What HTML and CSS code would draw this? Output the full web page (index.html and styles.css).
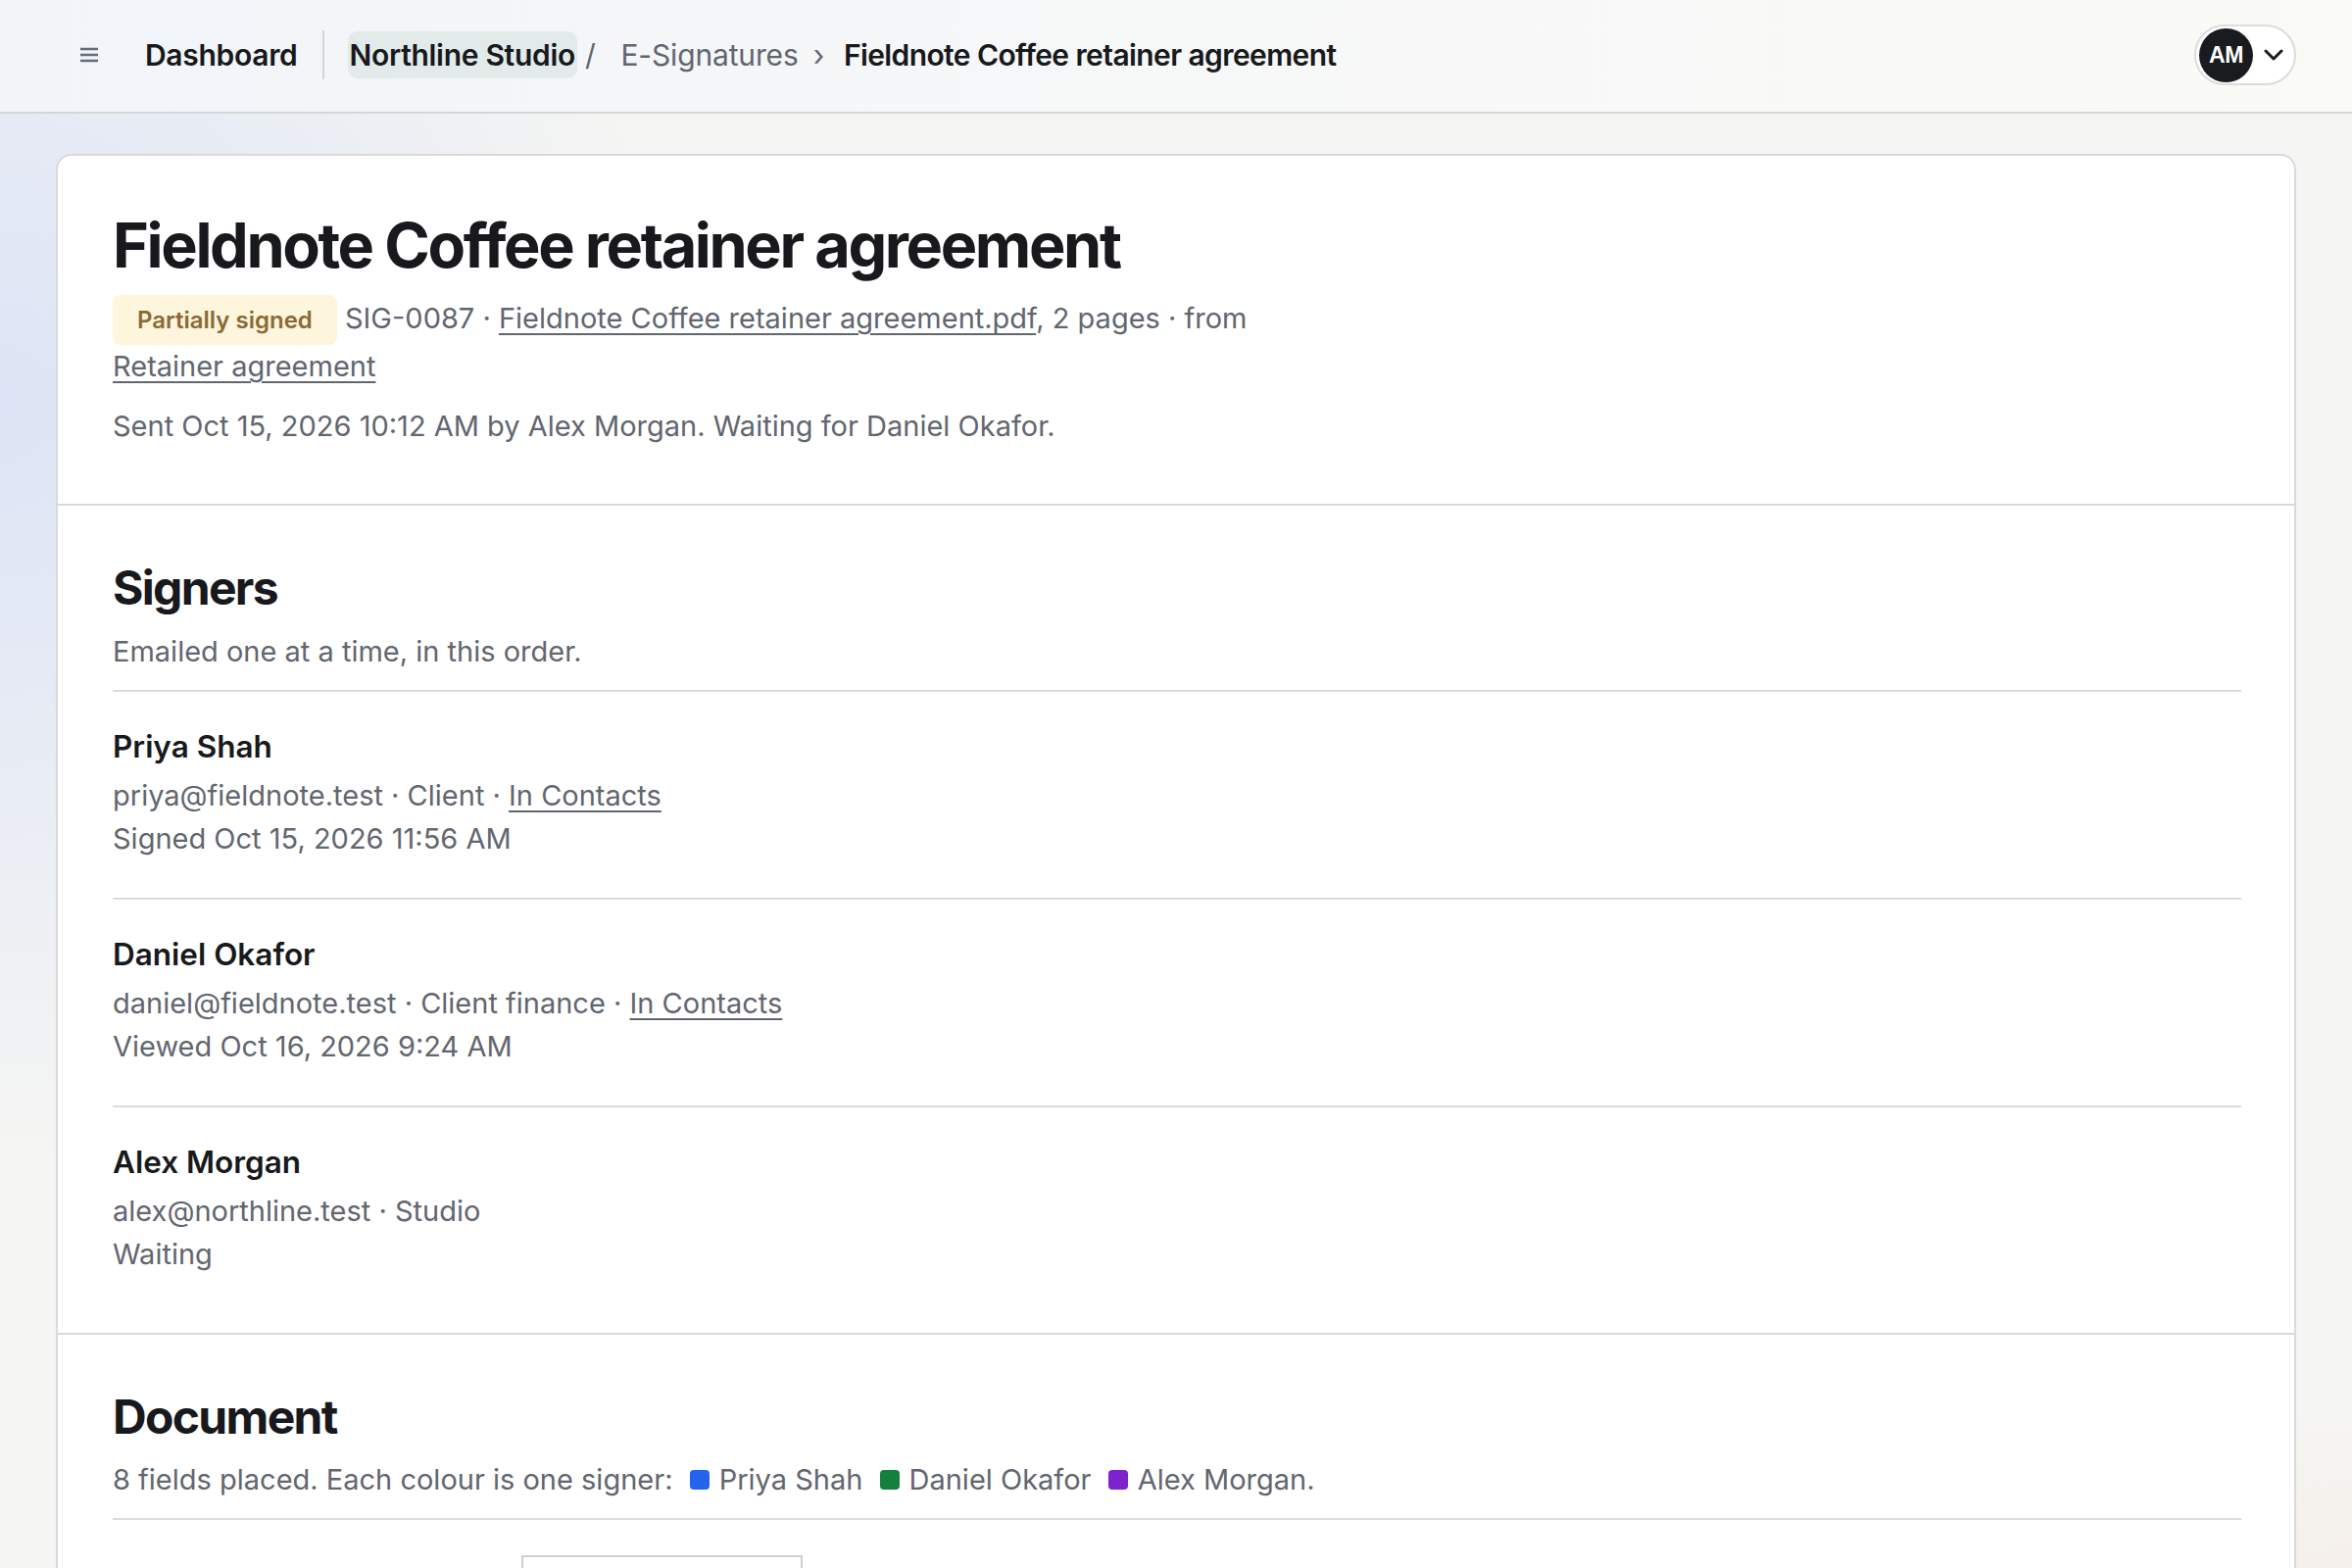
FILE: index.html
```html
<!DOCTYPE html>
<html lang="en">
<head>
<meta charset="utf-8">
<title>Fieldnote Coffee retainer agreement</title>
<link rel="stylesheet" href="styles.css">
</head>
<body>
<header class="topbar">
  <button class="menu-btn" aria-label="Menu">
    <svg width="20" height="16" viewBox="0 0 20 16"><path d="M1 2h18M1 8h18M1 14h18" stroke="#676b74" stroke-width="2.4" fill="none"/></svg>
  </button>
  <nav class="crumbs">
    <a class="crumb-home" href="#">Dashboard</a>
    <span class="crumb-divider"></span>
    <a class="crumb-org" href="#">Northline Studio</a>
    <span class="crumb-slash">/</span>
    <a class="crumb-muted" href="#">E-Signatures</a>
    <span class="crumb-chev">›</span>
    <span class="crumb-current">Fieldnote Coffee retainer agreement</span>
  </nav>
  <button class="account" aria-label="Account">
    <span class="avatar">AM</span>
    <svg width="20" height="12" viewBox="0 0 20 12"><path d="M2 2l8 8 8-8" stroke="#1a1b1f" stroke-width="3" fill="none" stroke-linecap="round" stroke-linejoin="round"/></svg>
  </button>
</header>
<main class="page">
  <article class="card">
    <section class="card-section summary">
      <h1 class="doc-title">Fieldnote Coffee retainer agreement</h1>
      <p class="meta"><span class="badge">Partially signed</span> SIG-0087 · <a href="#">Fieldnote Coffee retainer agreement.pdf</a>, 2 pages · from <a href="#">Retainer agreement</a></p>
      <p class="sent">Sent Oct 15, 2026 10:12 AM by Alex Morgan. Waiting for Daniel Okafor.</p>
    </section>
    <section class="card-section signers">
      <h2 class="section-title">Signers</h2>
      <p class="section-sub">Emailed one at a time, in this order.</p>
      <ol class="signer-list">
        <li class="signer">
          <div class="signer-name">Priya Shah</div>
          <div class="signer-line">priya@fieldnote.test · Client · <a href="#">In Contacts</a></div>
          <div class="signer-line">Signed Oct 15, 2026 11:56 AM</div>
        </li>
        <li class="signer">
          <div class="signer-name">Daniel Okafor</div>
          <div class="signer-line">daniel@fieldnote.test · Client finance · <a href="#">In Contacts</a></div>
          <div class="signer-line">Viewed Oct 16, 2026 9:24 AM</div>
        </li>
        <li class="signer">
          <div class="signer-name">Alex Morgan</div>
          <div class="signer-line">alex@northline.test · Studio</div>
          <div class="signer-line">Waiting</div>
        </li>
      </ol>
    </section>
    <section class="card-section document">
      <h2 class="section-title">Document</h2>
      <p class="section-sub">8 fields placed. Each colour is one signer: <span class="swatch swatch-blue"></span>Priya Shah <span class="swatch swatch-green"></span>Daniel Okafor <span class="swatch swatch-purple"></span>Alex Morgan.</p>
      <div class="doc-viewer">
        <div class="doc-page"></div>
      </div>
    </section>
  </article>
</main>
</body>
</html>
```
FILE: styles.css
```css
* { box-sizing: border-box; }
html, body { margin: 0; padding: 0; }
body {
  font-family: Inter, "Noto Sans", sans-serif;
  color: #18191c;
  min-height: 1600px;
  background:
    radial-gradient(ellipse 1000px 1100px at 0% 20%, rgba(214, 224, 246, 0.8), rgba(214, 224, 246, 0) 70%),
    radial-gradient(ellipse 900px 900px at 100% 100%, rgba(245, 222, 204, 0.85), rgba(245, 222, 204, 0) 70%),
    #f5f5f3;
}
a { color: inherit; }

.topbar {
  display: flex;
  align-items: center;
  height: 116px;
  padding: 0 57px 2px 72px;
  border-bottom: 2px solid #d6d6d6;
  background: linear-gradient(90deg, #f1f4f9 0%, #f6f7f8 40%, #fafaf7 100%);
}
.menu-btn {
  display: flex;
  align-items: center;
  justify-content: center;
  width: 38px;
  height: 38px;
  padding: 0;
  border: 0;
  background: none;
}
.crumbs {
  display: flex;
  align-items: center;
  margin-left: 38px;
  font-size: 30px;
  font-weight: 600;
  letter-spacing: -0.01em;
}
.crumbs a { text-decoration: none; }
.crumb-home { color: #18191c; }
.crumb-divider {
  width: 2px;
  height: 50px;
  margin: 0 24px 0 25px;
  background: #d3d4d6;
}
.crumb-org {
  color: #18191c;
  background: #e2ebea;
  border-radius: 10px;
  padding: 6px 2px;
}
.crumb-slash {
  margin: 0 26px 0 8px;
  font-weight: 400;
  color: #62666f;
}
.crumb-muted { color: #62666f; font-weight: 400; letter-spacing: -0.005em; }
.crumb-chev {
  margin: 0 20px 0 15px;
  font-weight: 400;
  color: #62666f;
}
.crumb-current { color: #18191c; letter-spacing: -0.02em; }

.account {
  margin-left: auto;
  display: flex;
  align-items: center;
  gap: 11px;
  height: 62px;
  padding: 0 11px 0 3px;
  border: 2px solid #dcdcdc;
  border-radius: 31px;
  background: #fff;
}
.avatar {
  display: flex;
  align-items: center;
  justify-content: center;
  width: 55px;
  height: 55px;
  border-radius: 50%;
  background: #1a1b1f;
  color: #fff;
  font-size: 23px;
  font-weight: 700;
  letter-spacing: -0.02em;
}

.page { padding: 41px 57px 0; }
.card {
  background: #fff;
  border: 2px solid #d9d9d9;
  border-radius: 16px;
  overflow: hidden;
}
.card-section {
  padding: 55px 54px 57px 56px;
  border-bottom: 2px solid #d9d9d9;
}
.card-section:last-child { border-bottom: 0; }

.doc-title {
  margin: 0 0 15px;
  font-size: 63px;
  line-height: 1.15;
  font-weight: 700;
  letter-spacing: -0.038em;
}
.meta, .sent, .section-sub, .signer-line {
  font-size: 29px;
  line-height: 44.5px;
  color: #62666f;
}
.meta { margin: 0; max-width: 1200px; }
.meta a, .signer-line a {
  text-decoration-thickness: 2px;
  text-underline-offset: 5px;
}
.badge {
  display: inline-block;
  padding: 11px 25px;
  font-size: 24px;
  line-height: 29px;
  font-weight: 600;
  color: #8a6a35;
  background: #fdf5dc;
  border-radius: 8px;
}
.sent { margin: 16px 0 0; }

.section-title {
  margin: 0 0 14px;
  font-size: 48px;
  line-height: 1.2;
  font-weight: 700;
  letter-spacing: -0.035em;
}
.section-sub {
  margin: 0;
  padding-bottom: 16px;
  border-bottom: 2px solid #dcdcdc;
}
.signers { padding-bottom: 20px; }
.signer-list { list-style: none; margin: 0; padding: 0; }
.signer {
  padding: 36px 0 37px;
  border-bottom: 2px solid #dcdcdc;
}
.signer:last-child { border-bottom: 0; }
.signer-name {
  margin-bottom: 9px;
  font-size: 31.5px;
  line-height: 39px;
  font-weight: 600;
  letter-spacing: 0;
}

.swatch {
  display: inline-block;
  width: 20px;
  height: 20px;
  margin: 0 10px 0 9px;
  border-radius: 4px;
}
.swatch-blue { background: #2563eb; }
.swatch-green { background: #15803d; }
.swatch-purple { background: #7e22ce; }

.doc-viewer {
  display: flex;
  padding: 36px 0 40px 417px;
}
.doc-page {
  width: 287px;
  height: 380px;
  border: 2px solid #d0d0d0;
  background: #fff;
}
```
